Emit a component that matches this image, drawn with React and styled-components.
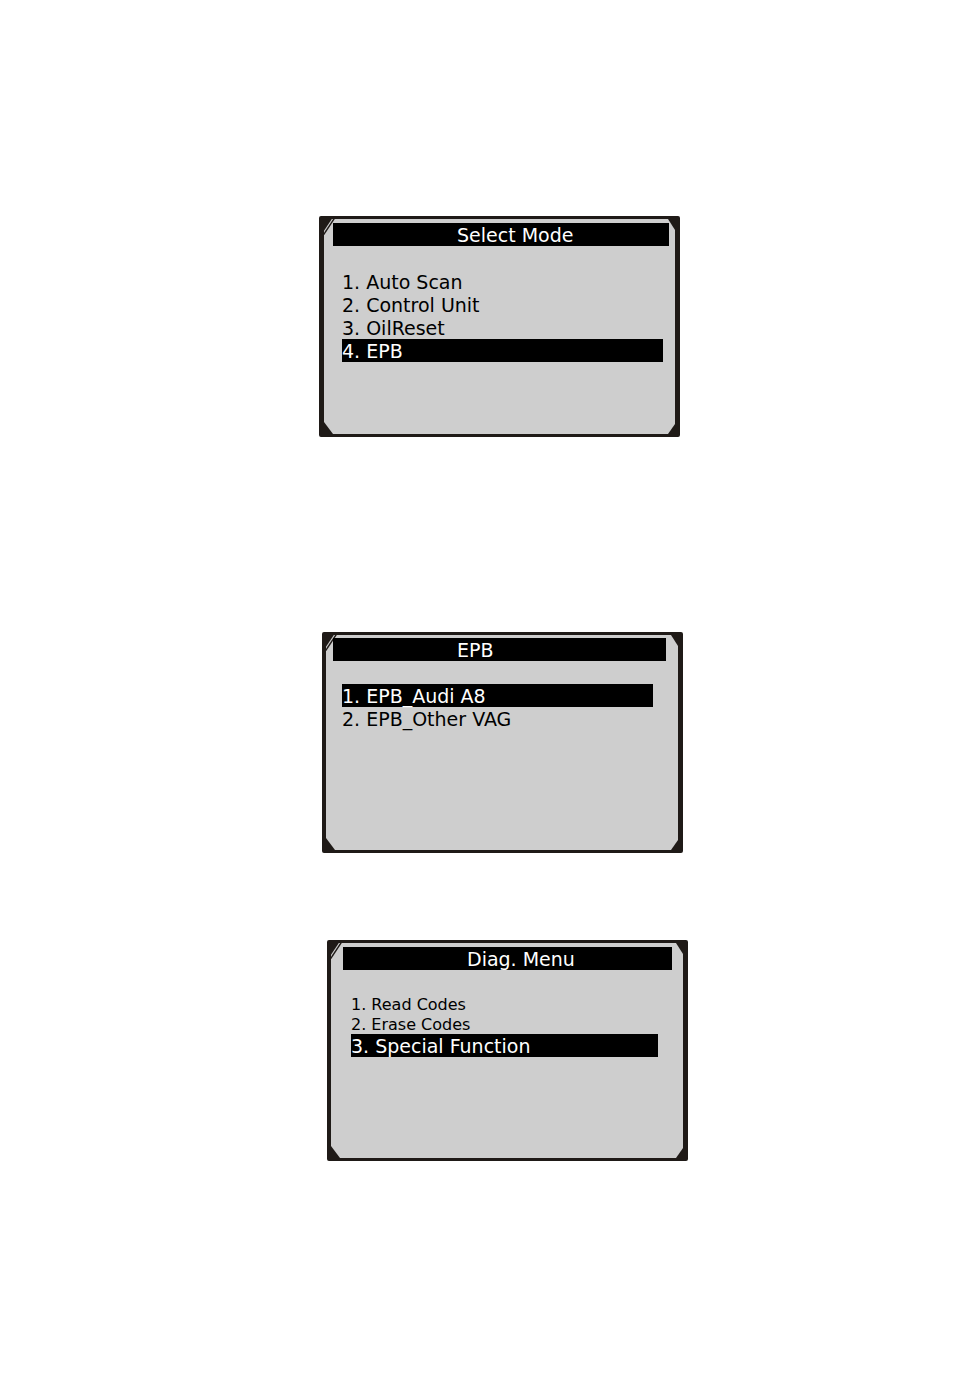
import React from "react";
import styled, { createGlobalStyle } from "styled-components";

const screens = [
  {
    title: "Select Mode",
    indent: 45,
    edge: 5,
    inset: 4,
    lead: 24,
    bar: [9, 6],
    list: [18, 12],
    items: [
      { text: "1. Auto Scan" },
      { text: "2. Control Unit" },
      { text: "3. OilReset" },
      { text: "4. EPB", selected: true },
    ],
  },
  {
    title: "EPB",
    indent: 51,
    edge: 4,
    inset: 3,
    lead: 23,
    bar: [7, 12],
    list: [16, 25],
    items: [
      { text: "1. EPB_Audi A8", selected: true },
      { text: "2. EPB_Other VAG" },
    ],
  },
  {
    title: "Diag. Menu",
    indent: 61,
    edge: 4,
    inset: 4,
    lead: 24,
    bar: [12, 11],
    list: [20, 25],
    items: [
      { text: "1. Read Codes", small: true },
      { text: "2. Erase Codes", small: true },
      { text: "3. Special Function", selected: true },
    ],
  },
];

function Corners() {
  return (
    <>
      <Corner $top $left viewBox="0 0 12 16">
        <path d="M0 0H7.8L0 11.8Z" fill="#1f1a17" />
        <path d="M10.3 -0.5L-0.3 15.5" stroke="#1f1a17" strokeWidth="1.4" />
      </Corner>
      <Corner $top viewBox="0 0 12 16">
        <path d="M5 0H12V11Z" fill="#1f1a17" />
      </Corner>
      <Corner $left viewBox="0 0 12 16">
        <path d="M0 4L9 16H0Z" fill="#1f1a17" />
      </Corner>
      <Corner viewBox="0 0 12 16">
        <path d="M12 6V16H5Z" fill="#1f1a17" />
      </Corner>
    </>
  );
}

function Screen({ title, edge, inset, lead, bar, list, items }) {
  return (
    <Frame $edge={edge} $inset={inset}>
      <Corners />
      <TitleBar $sides={bar}>{title}</TitleBar>
      <Menu $lead={lead} $sides={list}>
        {items.map((item) => (
          <MenuItem
            key={item.text}
            $selected={item.selected}
            $small={item.small}
          >
            {item.text}
          </MenuItem>
        ))}
      </Menu>
    </Frame>
  );
}

export default function App() {
  const [mode, epb, diag] = screens;

  return (
    <>
      <GlobalStyle />
      <Page>
        <Figure $indent={mode.indent} $after={195}>
          <Screen {...mode} />
        </Figure>
        <Figure $indent={epb.indent} $after={87}>
          <Screen {...epb} />
        </Figure>
        <Figure $indent={diag.indent} $after={0}>
          <Screen {...diag} />
        </Figure>
      </Page>
    </>
  );
}

// styled-components
const GlobalStyle = createGlobalStyle`
  * {
    box-sizing: border-box;
  }

  body {
    margin: 0;
    background: #fff;
    font-family: Verdana, "DejaVu Sans", sans-serif;
  }
`;

const Page = styled.main`
  display: flex;
  flex-direction: column;
  padding: 216px 0 213px;
`;

const Figure = styled.section`
  display: flex;
  justify-content: center;
  padding-left: ${({ $indent }) => $indent}px;
  margin-bottom: ${({ $after }) => $after}px;
`;

const Frame = styled.div`
  position: relative;
  width: 100%;
  max-width: 361px;
  min-height: 221px;
  padding-top: ${({ $inset }) => $inset}px;
  border: solid #1f1a17;
  border-width: 3px 5px 3px ${({ $edge }) => $edge}px;
  border-radius: 2px;
  background: #cecece;
`;

const Corner = styled.svg`
  position: absolute;
  width: 12px;
  height: 16px;
  fill: none;
  ${({ $top }) => ($top ? "top: 0;" : "bottom: 0;")}
  ${({ $left }) => ($left ? "left: 0;" : "right: 0;")}
`;

const TitleBar = styled.h2`
  position: relative;
  margin: 0 ${({ $sides }) => $sides[1]}px 0 ${({ $sides }) => $sides[0]}px;
  padding: 2px 0 0 124px;
  background: #000;
  color: #fff;
  font-size: 19px;
  font-weight: normal;
  line-height: 21px;
  white-space: nowrap;
`;

const Menu = styled.ol`
  margin: 0 ${({ $sides }) => $sides[1]}px 0 ${({ $sides }) => $sides[0]}px;
  padding: ${({ $lead }) => $lead}px 0 0;
  list-style: none;
`;

const MenuItem = styled.li`
  padding-top: 2px;
  background: ${({ $selected }) => ($selected ? "#000" : "transparent")};
  color: ${({ $selected }) => ($selected ? "#fff" : "#000")};
  font-size: ${({ $small }) => ($small ? 16 : 19)}px;
  line-height: ${({ $small }) => ($small ? 18 : 21)}px;
`;
